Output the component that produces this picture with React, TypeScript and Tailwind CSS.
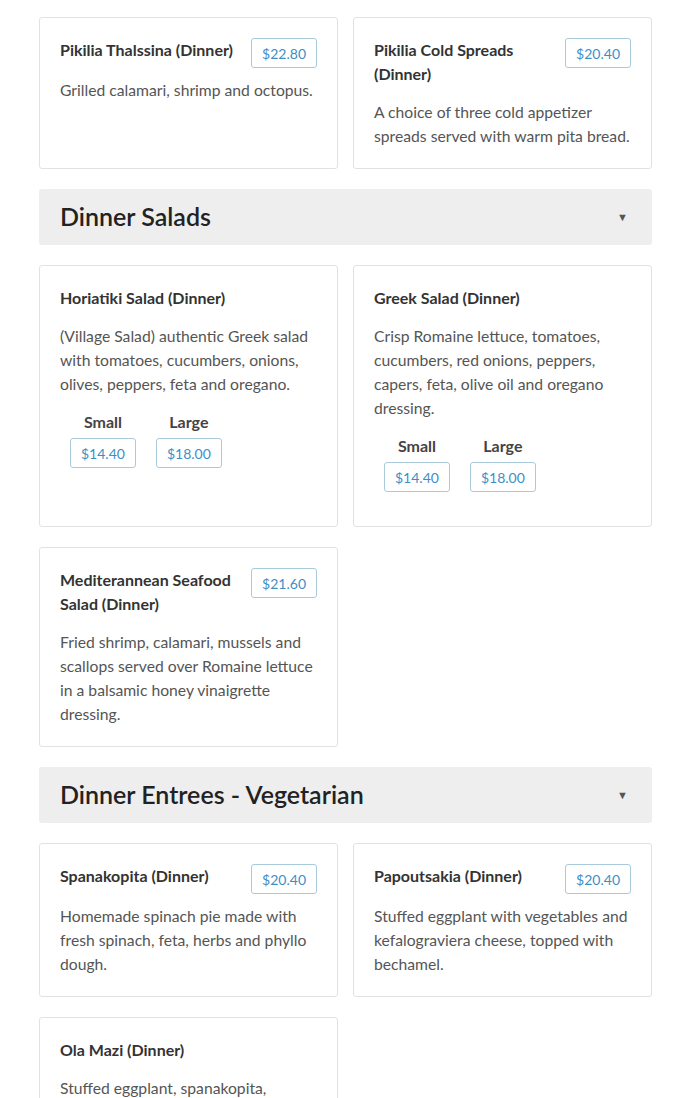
import React from 'react'

// ─── Types ────────────────────────────────────────────────────────────────────

interface MenuItem {
  name: string
  description: string
  price?: string
  sizes?: { label: string; price: string }[]
}

interface Section {
  title?: string
  items: MenuItem[]
}

// ─── Data ─────────────────────────────────────────────────────────────────────

const sections: Section[] = [
  {
    items: [
      {
        name: 'Pikilia Thalssina (Dinner)',
        price: '$22.80',
        description: 'Grilled calamari, shrimp and octopus.',
      },
      {
        name: 'Pikilia Cold Spreads (Dinner)',
        price: '$20.40',
        description: 'A choice of three cold appetizer spreads served with warm pita bread.',
      },
    ],
  },
  {
    title: 'Dinner Salads',
    items: [
      {
        name: 'Horiatiki Salad (Dinner)',
        description:
          '(Village Salad) authentic Greek salad with tomatoes, cucumbers, onions, olives, peppers, feta and oregano.',
        sizes: [
          { label: 'Small', price: '$14.40' },
          { label: 'Large', price: '$18.00' },
        ],
      },
      {
        name: 'Greek Salad (Dinner)',
        description:
          'Crisp Romaine lettuce, tomatoes, cucumbers, red onions, peppers, capers, feta, olive oil and oregano dressing.',
        sizes: [
          { label: 'Small', price: '$14.40' },
          { label: 'Large', price: '$18.00' },
        ],
      },
      {
        name: 'Mediterannean Seafood Salad (Dinner)',
        price: '$21.60',
        description:
          'Fried shrimp, calamari, mussels and scallops served over Romaine lettuce in a balsamic honey vinaigrette dressing.',
      },
    ],
  },
  {
    title: 'Dinner Entrees - Vegetarian',
    items: [
      {
        name: 'Spanakopita (Dinner)',
        price: '$20.40',
        description: 'Homemade spinach pie made with fresh spinach, feta, herbs and phyllo dough.',
      },
      {
        name: 'Papoutsakia (Dinner)',
        price: '$20.40',
        description: 'Stuffed eggplant with vegetables and kefalograviera cheese, topped with bechamel.',
      },
      {
        name: 'Ola Mazi (Dinner)',
        description:
          'Stuffed eggplant, spanakopita, gigantes beans and rice pilaf served with a side salad.',
      },
    ],
  },
]

// ─── Pieces ───────────────────────────────────────────────────────────────────

function PriceBadge({ price }: { price: string }) {
  return (
    <span className="inline-flex h-[30px] items-center rounded-[3px] border border-[#a9cadb] px-[10px] text-[14px] text-[#3c8fc6]">
      {price}
    </span>
  )
}

function ItemCard({ item }: { item: MenuItem }) {
  return (
    <div className="rounded-[3px] border border-[#e2e2e2] bg-white p-5">
      <div className="flex items-start justify-between gap-[10px]">
        <h3 className="mb-[14px] text-[16px] font-bold leading-6 text-[#333]">{item.name}</h3>
        {item.price && (
          <div className="mb-[10px] shrink-0">
            <PriceBadge price={item.price} />
          </div>
        )}
      </div>
      <p className="text-[15.7px] leading-6 text-[#555]">{item.description}</p>
      {item.sizes && (
        <div className="my-[14px] flex">
          {item.sizes.map(s => (
            <div key={s.label} className="mx-[10px] flex flex-col items-center gap-1">
              <span className="text-[16px] font-bold leading-6 text-[#444]">{s.label}</span>
              <PriceBadge price={s.price} />
            </div>
          ))}
        </div>
      )}
    </div>
  )
}

function SectionHeader({ title }: { title: string }) {
  return (
    <div className="flex h-[56px] items-center justify-between rounded-[3px] bg-[#eeeeee] pl-[21px] pr-[24px]">
      <h2 className="text-[25px] font-semibold text-[#222]">{title}</h2>
      <span className="text-[11px] text-[#555]">▼</span>
    </div>
  )
}

// ─── Main Component ───────────────────────────────────────────────────────────

export default function App() {
  return (
    <div
      className="min-h-screen bg-white pl-[39px] pr-[38px] pt-[17px]"
      style={{ fontFamily: 'Lato, "Open Sans", sans-serif' }}
    >
      <div className="flex flex-col gap-5">
        {sections.map((section, i) => (
          <React.Fragment key={i}>
            {section.title && <SectionHeader title={section.title} />}
            <div className="grid grid-cols-2 gap-x-[15px] gap-y-5">
              {section.items.map(item => (
                <ItemCard key={item.name} item={item} />
              ))}
            </div>
          </React.Fragment>
        ))}
      </div>
    </div>
  )
}
